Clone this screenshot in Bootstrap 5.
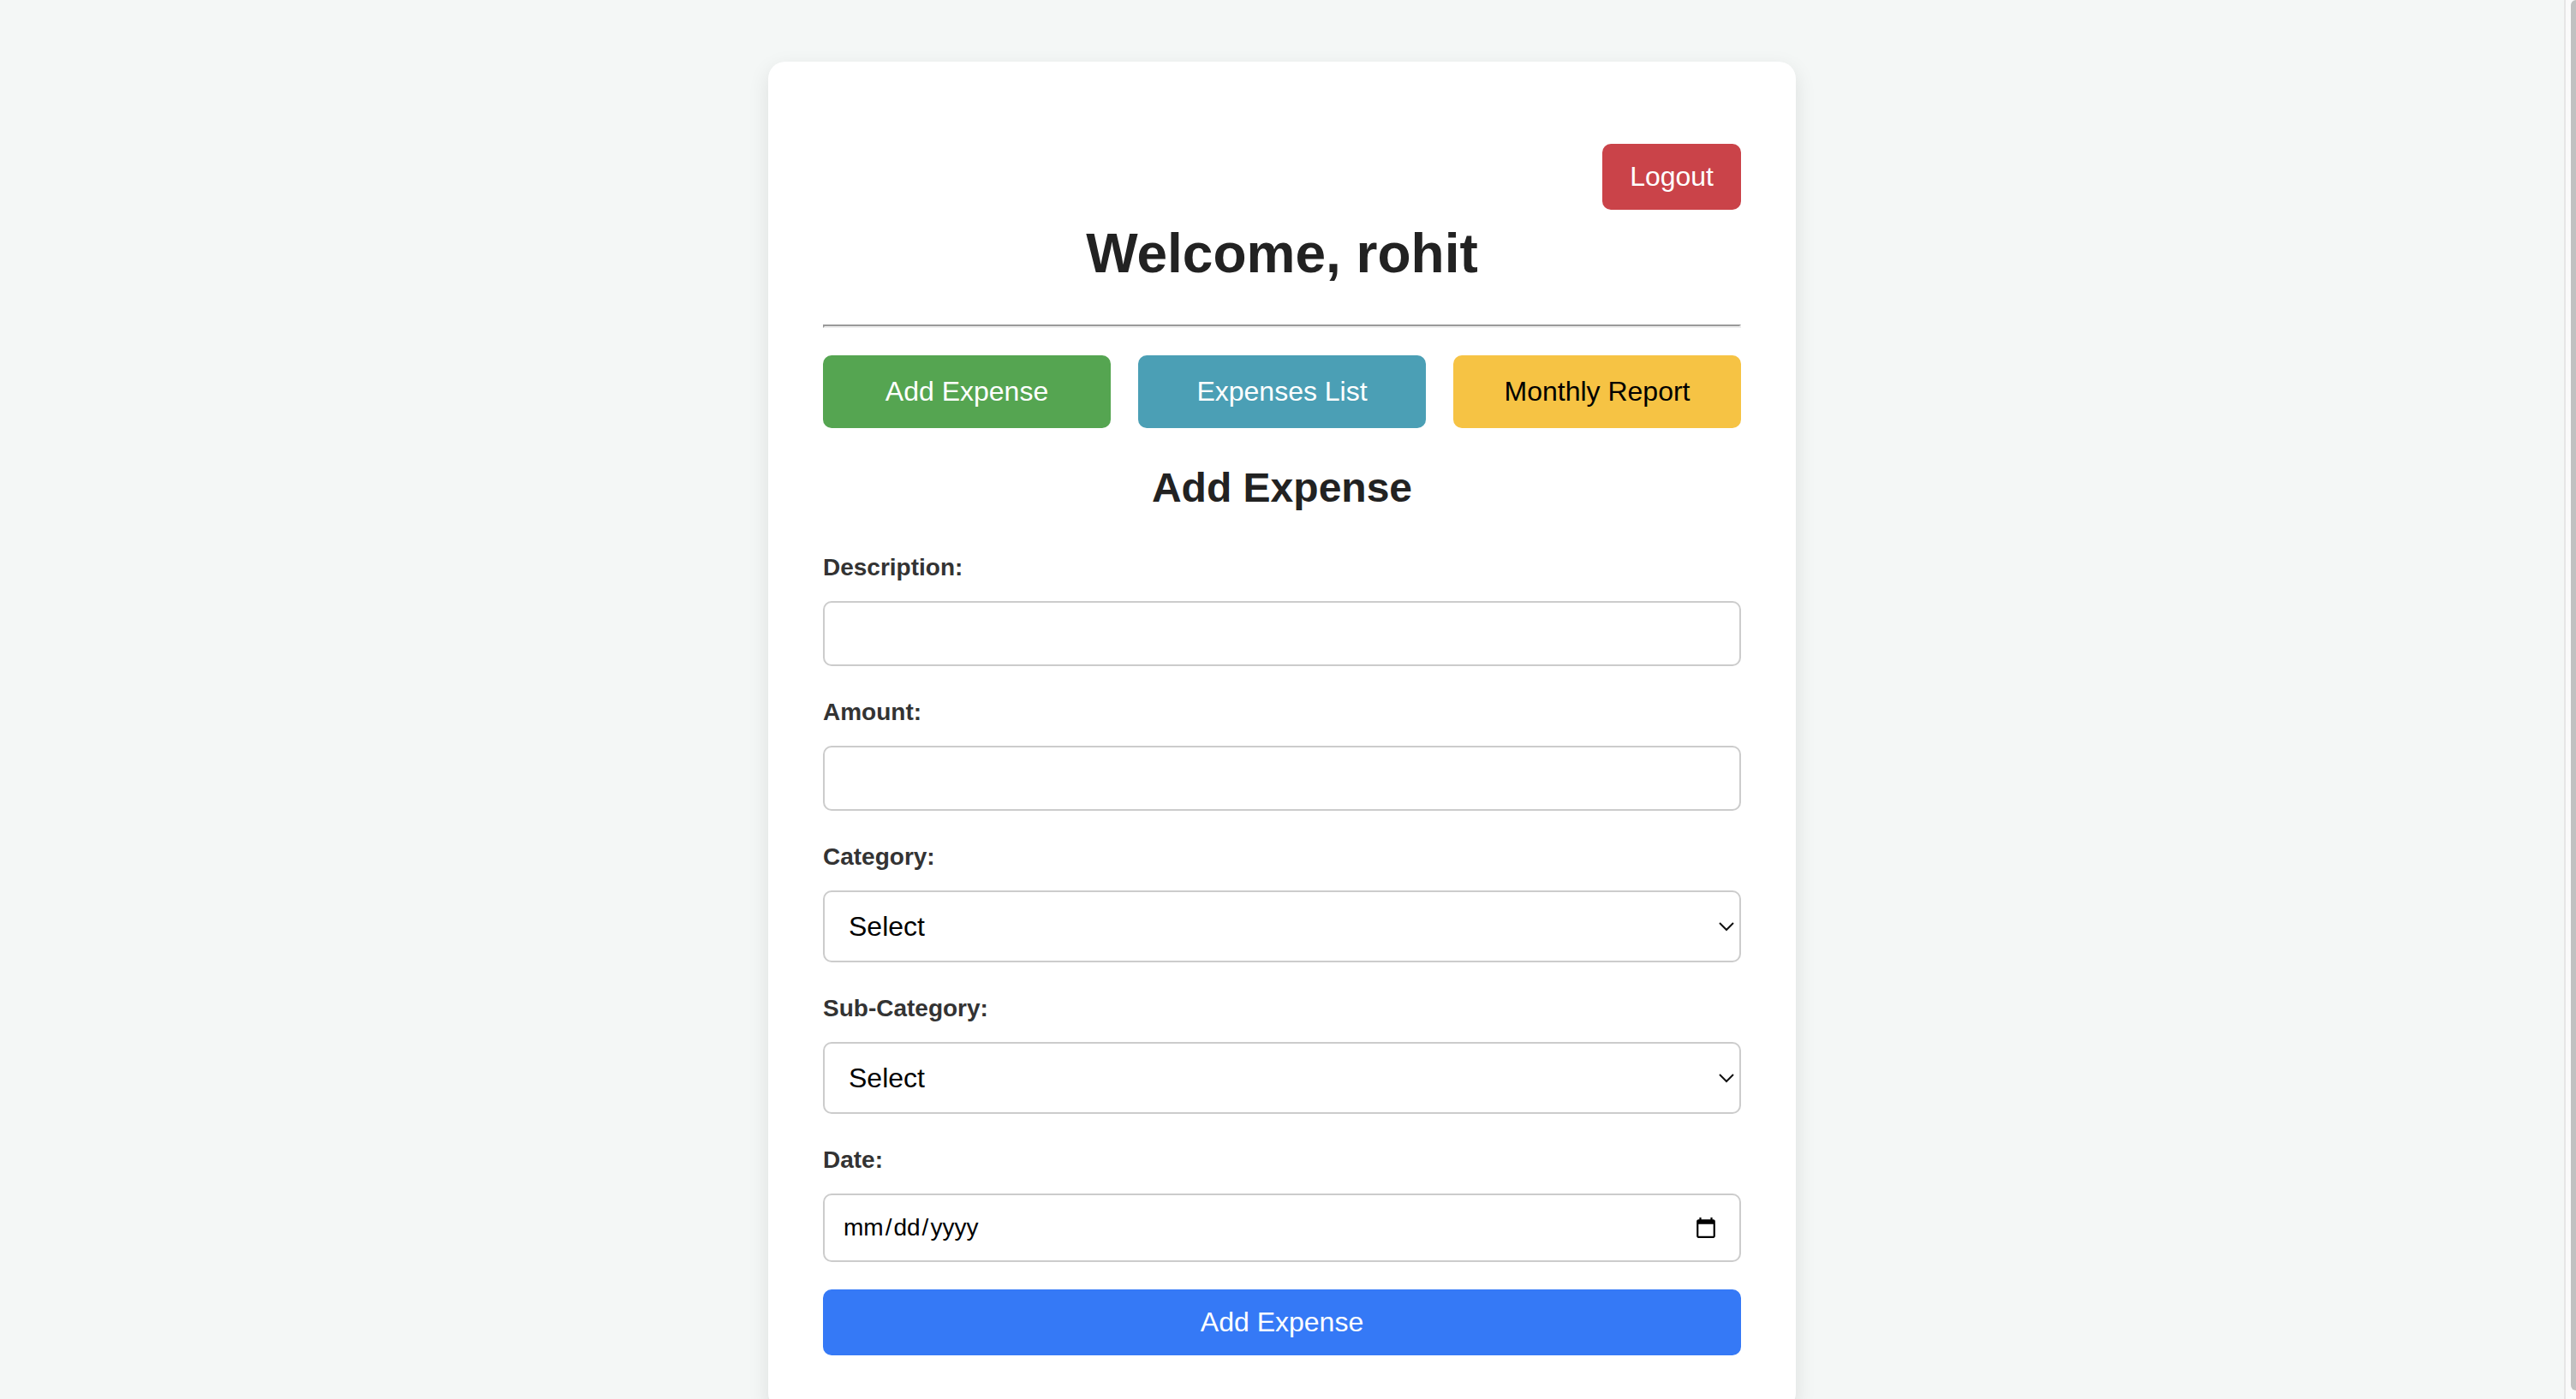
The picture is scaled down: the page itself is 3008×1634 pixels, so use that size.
<!DOCTYPE html>
<html lang="en">
<head>
<meta charset="utf-8">
<meta name="viewport" content="width=device-width, initial-scale=1">
<title>Expense Tracker</title>
<link href="https://cdn.jsdelivr.net/npm/bootstrap@5.3.0/dist/css/bootstrap.min.css" rel="stylesheet">
<style>
  body {
    font-family: "Liberation Sans", Arial, sans-serif;
    font-size: 32px;
    line-height: 1.6;
    color: #222;
    background: #f4f7f6;
  }
  .tracker-card {
    max-width: 1200px;
    margin-top: 72px;
    padding: 64px;
    border-radius: 20px;
    box-shadow: 0 8px 24px rgba(0, 0, 0, .1);
  }
  .top-bar { padding-top: 32px; }
  h1, h2 { font-weight: 700; line-height: 1.6; margin: 0; }
  h1 { font-size: 64px; }
  h2 { font-size: 48px; margin: 32px 0; }
  .divider {
    height: 4px;
    margin: 32px 0;
    border: 2px solid;
    border-color: #9a9a9a #eee #eee #9a9a9a;
    opacity: 1;
  }
  .tracker-btn {
    --bs-btn-font-size: 32px;
    --bs-btn-line-height: 37px;
    --bs-btn-padding-x: 32px;
    --bs-btn-padding-y: 20px;
    --bs-btn-border-width: 0;
    --bs-btn-border-radius: 10px;
    --bs-btn-color: #fff;
    --bs-btn-hover-color: #fff;
  }
  .tab-row { gap: 32px; }
  .tab-row .tracker-btn { --bs-btn-padding-y: 24px; flex: 1 1 0; }
  .btn-logout { background: #ca4349; }
  .btn-add { background: #55a551; }
  .btn-list { background: #4b9fb5; }
  .btn-report { --bs-btn-color: #000; --bs-btn-hover-color: #000; background: #f6c344; }
  .btn-save { background: #3579f6; }
  .field { margin-bottom: 32px; }
  .form-label { display: block; margin-bottom: 18px; font-size: 28px; line-height: 43px; font-weight: 700; color: #333; }
  .form-control, .form-select {
    padding: 20px;
    border: 2px solid #ccc;
    border-radius: 10px;
    font-size: 28px;
    line-height: 32px;
    color: #000;
    background-color: #fff;
  }
  .form-control { min-height: 76px; }
  .form-select {
    padding-left: 28px;
    font-size: 32px;
    line-height: 40px;
    background-image: url("data:image/svg+xml,%3Csvg xmlns='http://www.w3.org/2000/svg' viewBox='0 0 18 12'%3E%3Cpath d='M1 2l8 8 8-8' fill='none' stroke='%23111' stroke-width='2'/%3E%3C/svg%3E");
    background-position: right 6px center;
    background-size: 18px 12px;
  }
  input[type=date] { height: 80px; }
  ::-webkit-datetime-edit-month-field,
  ::-webkit-datetime-edit-day-field,
  ::-webkit-datetime-edit-year-field { padding: 0 2px; }
  ::-webkit-calendar-picker-indicator {
    width: 26px;
    height: 26px;
    padding: 0;
    margin-right: 6px;
    background: url("data:image/svg+xml,%3Csvg xmlns='http://www.w3.org/2000/svg' viewBox='0 0 24 24'%3E%3Cpath d='M20 3h-1V1h-2v2H7V1H5v2H4c-1.1 0-2 .9-2 2v16c0 1.1.9 2 2 2h16c1.1 0 2-.9 2-2V5c0-1.1-.9-2-2-2zm0 18H4V8h16v13z'/%3E%3C/svg%3E") center / 26px 26px no-repeat;
  }
  .scroll-track { width: 14px; padding: 0 0 10px 6px; background: #fafafa; border-left: 2px solid #e6e6e6; }
  .scroll-thumb { background: #c1c1c1; border-radius: 6px 0 0 6px; }
</style>
<script src="https://cdn.jsdelivr.net/npm/bootstrap@5.3.0/dist/js/bootstrap.bundle.min.js"></script>
</head>
<body>
<div class="d-flex vh-100 overflow-hidden">
  <div class="flex-grow-1 overflow-hidden">
    <main class="tracker-card bg-white mx-auto">
      <div class="top-bar d-flex justify-content-end">
        <button type="button" class="btn tracker-btn btn-logout">Logout</button>
      </div>
      <h1 class="text-center">Welcome, rohit</h1>
      <hr class="divider">
      <div class="tab-row d-flex">
        <button type="button" class="btn tracker-btn btn-add">Add Expense</button>
        <button type="button" class="btn tracker-btn btn-list">Expenses List</button>
        <button type="button" class="btn tracker-btn btn-report">Monthly Report</button>
      </div>
      <h2 class="text-center">Add Expense</h2>
      <form>
        <div class="field">
          <label class="form-label" for="description">Description:</label>
          <input type="text" class="form-control" id="description">
        </div>
        <div class="field">
          <label class="form-label" for="amount">Amount:</label>
          <input type="number" class="form-control" id="amount">
        </div>
        <div class="field">
          <label class="form-label" for="category">Category:</label>
          <select class="form-select" id="category"><option>Select</option></select>
        </div>
        <div class="field">
          <label class="form-label" for="subcategory">Sub-Category:</label>
          <select class="form-select" id="subcategory"><option>Select</option></select>
        </div>
        <div class="field">
          <label class="form-label" for="date">Date:</label>
          <input type="date" class="form-control" id="date">
        </div>
        <button type="submit" class="btn tracker-btn btn-save w-100">Add Expense</button>
      </form>
    </main>
  </div>
  <div class="scroll-track flex-shrink-0" aria-hidden="true"><div class="scroll-thumb h-100"></div></div>
</div>
</body>
</html>
